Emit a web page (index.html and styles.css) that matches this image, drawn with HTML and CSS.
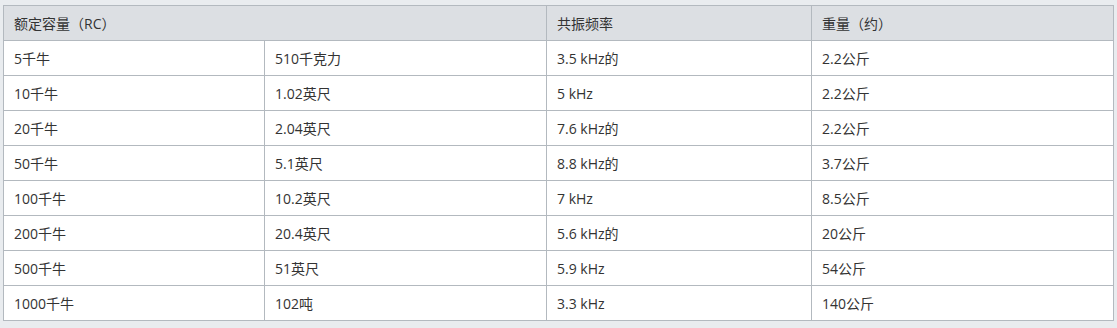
FILE: index.html
```html
<!DOCTYPE html>
<html lang="zh">
<head>
<meta charset="utf-8">
<title>规格</title>
<link rel="stylesheet" href="styles.css">
</head>
<body>
<div class="wrap">
<table class="spec">
<colgroup>
<col class="c1"><col class="c2"><col class="c3"><col class="c4">
</colgroup>
<thead>
<tr><th colspan="2">额定容量（RC）</th><th>共振频率</th><th>重量（约）</th></tr>
</thead>
<tbody>
<tr><td>5千牛</td><td>510千克力</td><td>3.5 kHz的</td><td>2.2公斤</td></tr>
<tr><td>10千牛</td><td>1.02英尺</td><td>5 kHz</td><td>2.2公斤</td></tr>
<tr><td>20千牛</td><td>2.04英尺</td><td>7.6 kHz的</td><td>2.2公斤</td></tr>
<tr><td>50千牛</td><td>5.1英尺</td><td>8.8 kHz的</td><td>3.7公斤</td></tr>
<tr><td>100千牛</td><td>10.2英尺</td><td>7 kHz</td><td>8.5公斤</td></tr>
<tr><td>200千牛</td><td>20.4英尺</td><td>5.6 kHz的</td><td>20公斤</td></tr>
<tr><td>500千牛</td><td>51英尺</td><td>5.9 kHz</td><td>54公斤</td></tr>
<tr><td>1000千牛</td><td>102吨</td><td>3.3 kHz</td><td>140公斤</td></tr>
</tbody>
</table>
</div>
</body>
</html>
```
FILE: styles.css
```css
html, body {
  margin: 0;
  padding: 0;
  background: #e9ecef;
}
body {
  font-family: "Open Sans", "Noto Sans CJK SC", sans-serif;
  font-size: 14px;
  color: #333;
}
.wrap {
  padding: 5px 0 0 3px;
}
.spec {
  border-collapse: collapse;
  table-layout: fixed;
  width: 1110px;
  background: #fff;
}
.c1 { width: 261px; }
.c2 { width: 282px; }
.c3 { width: 265px; }
.c4 { width: 302px; }
.spec th, .spec td {
  border: 1px solid #b3b9bf;
  height: 35px;
  padding: 0 10px;
  box-sizing: border-box;
  text-align: left;
  font-weight: normal;
  vertical-align: middle;
  white-space: nowrap;
}
.spec th {
  background: #dcdfe3;
}
```
